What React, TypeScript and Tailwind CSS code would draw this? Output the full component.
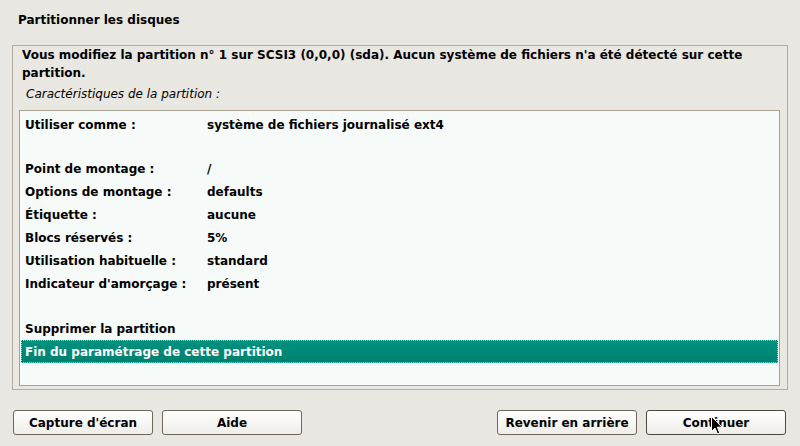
import React from 'react';

const rows: ([string, string] | null)[] = [
  ['Utiliser comme :', 'système de fichiers journalisé ext4'],
  null,
  ['Point de montage :', '/'],
  ['Options de montage :', 'defaults'],
  ['Étiquette :', 'aucune'],
  ['Blocs réservés :', '5%'],
  ['Utilisation habituelle :', 'standard'],
  ["Indicateur d'amorçage :", 'présent'],
  null,
];

function Button({ label, active }: { label: string; active?: boolean }) {
  return (
    <button
      className={
        'w-[140px] h-[25px] rounded-[3px] border bg-gradient-to-b from-white to-[#efede8] text-[12px] font-bold text-black ' +
        (active ? 'border-[#4e473d]' : 'border-[#6f675b]')
      }
    >
      {label}
    </button>
  );
}

export default function App() {
  return (
    <div
      className="relative w-[800px] h-[446px] bg-[#e9e7e1] text-black text-[12px] overflow-hidden"
      style={{ fontFamily: '"DejaVu Sans", sans-serif' }}
    >
      <div className="h-[45px] pl-[18px] pt-[13px] font-bold leading-[14px]">Partitionner les disques</div>

      <div className="mx-[12px] h-[345px] border border-[#b4ad9f] pl-[6px] pr-[7px] flex flex-col">
        <div className="pl-[3px] pr-[8px] font-bold leading-[18px]">
          Vous modifiez la partition n° 1 sur SCSI3 (0,0,0) (sda). Aucun système de fichiers n'a été détecté sur cette
          partition.
        </div>
        <div className="pl-[7px] mt-[3px] italic leading-[18px]">Caractéristiques de la partition :</div>

        <div className="mt-[7px] h-[276px] border border-[#a9a192] bg-[#f6faf8] pt-[2px] px-px">
          {rows.map((r, i) =>
            r ? (
              <div key={i} className="h-[23px] flex items-center pl-[4px] font-bold">
                <span className="w-[182px]">{r[0]}</span>
                <span>{r[1]}</span>
              </div>
            ) : (
              <div key={i} className={i === 1 ? 'h-[21px]' : 'h-[22px]'} />
            )
          )}
          <div className="h-[23px] flex items-center pl-[4px] font-bold">Supprimer la partition</div>
          <div className="h-[23px] flex items-center pl-[3px] font-bold text-white bg-gradient-to-b from-[#00917f] to-[#00806f] border border-dotted border-[#9fd3c9]">
            Fin du paramétrage de cette partition
          </div>
        </div>
      </div>

      <div className="mt-[20px] flex justify-between pl-[13px] pr-[14px]">
        <div className="flex gap-[9px]">
          <Button label="Capture d'écran" />
          <Button label="Aide" />
        </div>
        <div className="flex gap-[9px]">
          <Button label="Revenir en arrière" />
          <Button label="Continuer" active />
        </div>
      </div>

      <svg className="absolute left-[711px] top-[416px]" width="12" height="19" viewBox="0 0 12 19">
        <path d="M0.5 0.5 L0.5 15.5 L4 12 L6.5 18 L8.8 17 L6.3 11.2 L11 11.2 Z" fill="black" stroke="white" strokeWidth="1" />
      </svg>
    </div>
  );
}
